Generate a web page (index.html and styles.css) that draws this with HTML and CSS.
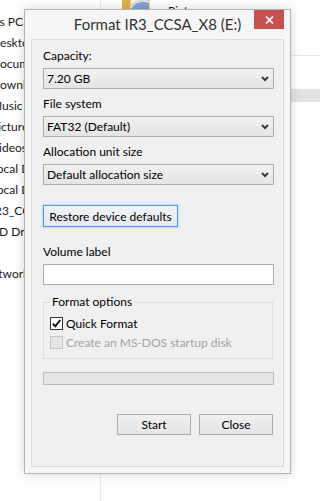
FILE: index.html
```html
<!DOCTYPE html>
<html lang="en">
<head>
<meta charset="utf-8">
<title>Format IR3_CCSA_X8 (E:)</title>
<link rel="stylesheet" href="styles.css">
</head>
<body>
<div class="explorer">
  <nav class="nav">
    <div class="nav-item">This PC</div>
    <div class="nav-item sub">Desktop</div>
    <div class="nav-item sub">Documents</div>
    <div class="nav-item sub">Downloads</div>
    <div class="nav-item sub">Music</div>
    <div class="nav-item sub">Pictures</div>
    <div class="nav-item sub">Videos</div>
    <div class="nav-item sub">Local Disk (C:)</div>
    <div class="nav-item sub">Local Disk (D:)</div>
    <div class="nav-item sub">IR3_CCSA_X8 (E:)</div>
    <div class="nav-item sub">CD Drive (F:)</div>
    <div class="nav-spacer"></div>
    <div class="nav-item">Network</div>
  </nav>
  <main class="content">
    <div class="tile">
      <svg class="folder" width="28" height="24" viewBox="0 0 28 24">
        <rect x="0" y="0" width="28" height="24" fill="#f3d477"/>
        <rect x="0" y="0" width="8" height="24" fill="#dfb149"/>
        <rect x="9" y="0" width="18" height="24" fill="#f9f3df"/>
        <path d="M9 24 C13 17 20 15 27 18 L27 24 Z" fill="#7fa6d6"/>
        <path d="M9 21 C14 15 21 14 27 16" stroke="#c9d9ee" stroke-width="1.5" fill="none"/>
      </svg>
      <span class="tile-name">Pictures</span>
    </div>
    <div class="rule"></div>
    <div class="row-sel"></div>
  </main>
</div>

<div class="dialog">
  <div class="titlebar">
    <span></span>
    <div class="title">Format IR3_CCSA_X8 (E:)</div>
    <button class="close-btn" aria-label="Close">
      <svg width="9" height="8" viewBox="0 0 9 8"><path d="M1 0.5 L8 7.5 M8 0.5 L1 7.5" stroke="#fff" stroke-width="1.7" fill="none"/></svg>
    </button>
  </div>
  <div class="client">
    <div class="lbl">Capacity:</div>
    <div class="combo"><span>7.20 GB</span><svg class="chev" width="8" height="6" viewBox="0 0 8 6"><path d="M1 1 L4 4 L7 1" stroke="#3c3c3c" stroke-width="2" fill="none"/></svg></div>

    <div class="lbl gap">File system</div>
    <div class="combo"><span>FAT32 (Default)</span><svg class="chev" width="8" height="6" viewBox="0 0 8 6"><path d="M1 1 L4 4 L7 1" stroke="#3c3c3c" stroke-width="2" fill="none"/></svg></div>

    <div class="lbl gap">Allocation unit size</div>
    <div class="combo"><span>Default allocation size</span><svg class="chev" width="8" height="6" viewBox="0 0 8 6"><path d="M1 1 L4 4 L7 1" stroke="#3c3c3c" stroke-width="2" fill="none"/></svg></div>

    <button class="btn restore">Restore device defaults</button>

    <div class="lbl vol">Volume label</div>
    <div class="textbox"></div>

    <fieldset class="group">
      <legend>Format options</legend>
      <div class="chk-row">
        <span class="chk"><svg width="11" height="11" viewBox="0 0 11 11"><path d="M1.8 5.6 L4.3 8.2 L9.3 2" stroke="#111" stroke-width="1.9" fill="none"/></svg></span>
        <span>Quick Format</span>
      </div>
      <div class="chk-row disabled">
        <span class="chk"></span>
        <span>Create an MS-DOS startup disk</span>
      </div>
    </fieldset>

    <div class="progress"></div>

    <div class="actions">
      <button class="btn act">Start</button>
      <button class="btn act">Close</button>
    </div>
  </div>
</div>
</body>
</html>
```

FILE: styles.css
```css
* { box-sizing: border-box; margin: 0; padding: 0; }
html, body { width: 320px; height: 501px; overflow: hidden; }
body {
  background: #fff;
  font-family: Lato, "Open Sans", sans-serif;
  font-size: 12px;
  color: #000;
  position: relative;
}

/* background explorer window */
.explorer { display: flex; height: 501px; }
.nav {
  flex: none;
  width: 118px;
  margin-left: -17px;
  padding-top: 11px;
  border-right: 1px solid #e8e8e8;
}
.nav-item {
  height: 21px;
  line-height: 21px;
  white-space: nowrap;
  overflow: hidden;
  color: #1a1a1a;
}
.nav-item.sub { padding-left: 8px; }
.nav-spacer { height: 21px; }
.content { flex: 1; display: flex; flex-direction: column; }
.tile { height: 40px; display: flex; align-items: flex-start; padding-left: 21px; }
.folder { margin-top: -15px; flex: none; display: block; }
.tile-name { margin-left: 18px; margin-top: 3px; line-height: 16px; color: #1a1a1a; }
.rule { margin-top: 15px; height: 1px; background: #e6e6e6; }
.row-sel { margin-top: 33px; height: 13px; background: #e3e3e3; }

/* dialog window */
.dialog {
  position: absolute;
  left: 24px;
  top: 9px;
  width: 267px;
  height: 465px;
  border: 1px solid #b3b3b3;
  background: #f6f6f6;
  padding: 0 6px 6px;
  display: flex;
  flex-direction: column;
  box-shadow: 0 0 10px rgba(0, 0, 0, 0.16);
}
.titlebar {
  height: 29px;
  flex: none;
  display: grid;
  grid-template-columns: 1fr auto 1fr;
  align-items: start;
}
.title {
  font-size: 15px;
  line-height: 20px;
  margin-top: 4px;
  color: #333;
  white-space: nowrap;
}
.close-btn {
  justify-self: end;
  width: 30px;
  height: 19px;
  border: 0;
  background: #c75050;
  display: flex;
  align-items: center;
  justify-content: center;
}
.close-btn svg { display: block; }

.client {
  flex: 1;
  background: #f0f0f0;
  border: 1px solid #dadada;
  padding: 8px 9px 0 11px;
  display: flex;
  flex-direction: column;
}
.lbl { line-height: 16px; margin-bottom: 4px; }
.lbl.gap { margin-top: 7px; }
.lbl.vol { margin-top: 17px; }

.combo {
  height: 21px;
  border: 1px solid #acacac;
  background: linear-gradient(#f2f2f2, #e4e4e4);
  display: flex;
  align-items: center;
  padding: 0 4px 0 3px;
}
.chev { margin-left: auto; display: block; }

.btn {
  font-family: inherit;
  font-size: 12px;
  color: #000;
  border: 1px solid #acacac;
  background: linear-gradient(#f0f0f0, #e5e5e5);
  height: 21px;
}
.restore {
  align-self: flex-start;
  margin-top: 20px;
  width: 135px;
  height: 22px;
  border-color: #4a97e0;
  background: linear-gradient(#f1f4f7, #e6eaee);
  box-shadow: 0 0 2px 1px rgba(130, 185, 240, 0.35);
}

.textbox {
  height: 21px;
  background: #fff;
  border: 1px solid #acacac;
}

.group {
  margin-top: 9px;
  margin-right: 1px;
  border: 1px solid #dcdcdc;
  padding: 4px 6px 6px 6px;
}
.group legend { padding: 0 2px; line-height: 16px; }
.chk-row { height: 19px; display: flex; align-items: center; gap: 3px; }
.chk {
  width: 13px;
  height: 13px;
  border: 1px solid #333;
  background: #fff;
  flex: none;
}
.chk svg { display: block; }
.chk-row.disabled { color: #a3a3a3; }
.chk-row.disabled .chk { border-color: #c4c4c4; background: #e6e6e6; }

.progress {
  margin-top: 13px;
  height: 13px;
  border: 1px solid #bcbcbc;
  background: #e6e6e6;
}

.actions {
  margin-top: 29px;
  display: flex;
  justify-content: flex-end;
  gap: 8px;
  padding-right: 1px;
}
.act { width: 74px; }
```
